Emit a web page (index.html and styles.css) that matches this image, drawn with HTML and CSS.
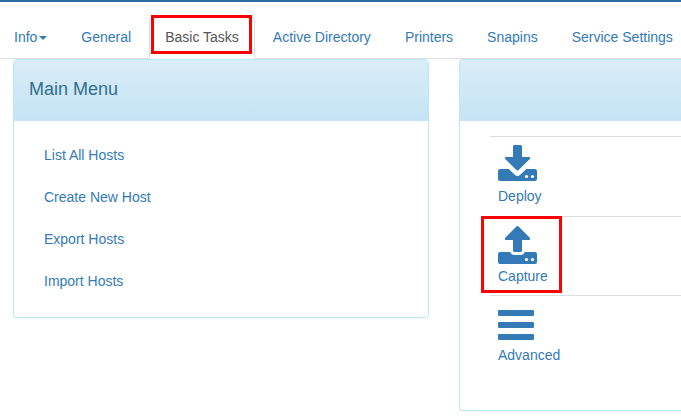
FILE: index.html
```html
<!DOCTYPE html>
<html lang="en">
<head>
<meta charset="utf-8">
<title>Basic Tasks</title>
<link rel="stylesheet" href="styles.css">
</head>
<body>
<header class="topbar"></header>
<nav class="tabs">
  <a class="tab">Info<span class="caret"></span></a>
  <a class="tab">General</a>
  <a class="tab active">Basic Tasks<span class="mark mark-tab"></span></a>
  <a class="tab">Active Directory</a>
  <a class="tab">Printers</a>
  <a class="tab">Snapins</a>
  <a class="tab last">Service Settings</a>
</nav>
<main class="columns">
  <section class="panel menu">
    <header class="heading"><h4>Main Menu</h4></header>
    <div class="menu-list">
      <a>List All Hosts</a>
      <a>Create New Host</a>
      <a>Export Hosts</a>
      <a>Import Hosts</a>
    </div>
  </section>
  <section class="panel tasks">
    <header class="heading"></header>
    <div class="task-list">
      <a class="task">
        <svg class="icon" width="40" height="42" viewBox="0 0 40 42">
          <path d="M2 24H11L17 30Q19.5 32.3 22 30L28 24H37Q39 24 39 26V34Q39 36 37 36H2Q0 36 0 34V26Q0 24 2 24Z"/>
          <path class="cut" d="M10.3 23.5L16.8 29Q19.5 31 22.2 29L28.7 23.5Z"/>
          <path d="M16.5 0H22.5Q24 0 24 1.5V12H31Q32.8 12.3 31.8 14L20.6 25Q19.5 26 18.4 25L7.2 14Q6.2 12.3 8 12H15V1.5Q15 0 16.5 0Z"/>
          <circle class="cut" cx="28.5" cy="31.5" r="1.6"/><circle class="cut" cx="34.5" cy="31.5" r="1.6"/>
        </svg>
        <span>Deploy</span>
      </a>
      <a class="task">
        <svg class="icon" width="40" height="42" viewBox="0 0 40 42">
          <path d="M2 27H12.3Q13.2 30 16.5 30H22.5Q25.8 30 26.7 27H37Q39 27 39 29V37Q39 39 37 39H2Q0 39 0 37V29Q0 27 2 27Z"/>
          <path d="M18.4 1.5Q19.5.6 20.6 1.5L31.8 12.7Q32.8 14.7 31 15H24V25.5Q24 27 22.5 27H16.5Q15 27 15 25.5V15H8Q6.2 14.7 7.2 12.7Z"/>
          <circle class="cut" cx="28.5" cy="34.5" r="1.6"/><circle class="cut" cx="34.5" cy="34.5" r="1.6"/>
        </svg>
        <span>Capture</span>
        <span class="mark mark-task"></span>
      </a>
      <a class="task">
        <svg class="icon" width="40" height="42" viewBox="0 0 40 42">
          <rect y="6" width="36" height="6" rx="1.3"/><rect y="18" width="36" height="6" rx="1.3"/><rect y="30" width="36" height="6" rx="1.3"/>
        </svg>
        <span>Advanced</span>
      </a>
    </div>
  </section>
</main>
</body>
</html>
```
FILE: styles.css
```css
* { box-sizing: border-box; }
body {
  margin: 0;
  height: 417px;
  overflow: hidden;
  background: #fff;
  color: #337ab7;
  font: 14px/20px "Liberation Sans", Arial, sans-serif;
}
.topbar { height: 2px; background: #2e6da4; }
.tabs {
  display: flex;
  gap: 2px;
  height: 42px;
  margin: 15px 0 0 -2px;
  border-bottom: 1px solid #ddd;
  white-space: nowrap;
}
.tab {
  position: relative;
  flex: none;
  height: 42px;
  padding: 9px 15px;
  border: 1px solid transparent;
  border-radius: 4px 4px 0 0;
}
.tab.last { padding-right: 0; }
.tab.active { color: #555; background: #fff; border-color: #ddd #ddd #fff; }
.caret {
  display: inline-block;
  margin-left: 2px;
  vertical-align: middle;
  border-top: 4px solid;
  border-left: 4px solid transparent;
  border-right: 4px solid transparent;
}
.mark { position: absolute; border: 3px solid #f00; }
.mark-tab { left: 1px; top: -3px; width: 101px; height: 39px; }
.columns {
  display: flex;
  align-items: flex-start;
  gap: 30px;
  padding-left: 13px;
}
.panel {
  border: 1px solid #bce8f1;
  border-radius: 4px;
  box-shadow: 0 1px 2px rgba(0, 0, 0, .05);
}
.menu { flex: none; width: 416px; height: 259px; }
.tasks { flex: 1; height: 352px; border-right: 0; border-radius: 4px 0 0 4px; }
.heading {
  height: 61px;
  padding: 19px 15px;
  border-radius: 3px 3px 0 0;
  background: linear-gradient(#d9edf7, #c4e3f3);
}
.tasks .heading { border-radius: 3px 0 0 0; }
h4 { margin: 0; font-size: 18px; font-weight: 400; line-height: 20px; color: #31708f; }
.menu-list { display: flex; flex-direction: column; gap: 2px; padding: 14px 15px; }
.menu-list a { padding: 10px 15px; }
.task-list { padding: 15px 0 0 30px; }
.task {
  position: relative;
  display: block;
  height: 79.6px;
  padding: 8px;
  border-top: 1px solid #ddd;
}
.task span { display: block; margin-top: -1px; }
.icon { display: block; fill: #337ab7; }
.icon .cut { fill: #fff; }
.task .mark-task { left: -9px; top: 0; width: 81px; height: 77px; }
```
